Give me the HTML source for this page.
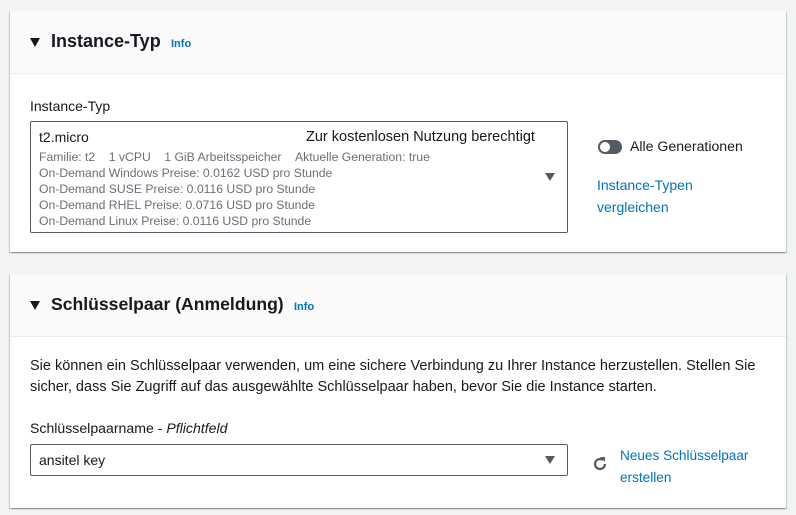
<!DOCTYPE html>
<html><head><meta charset="utf-8"><style>
*{box-sizing:border-box;margin:0;padding:0}
body{width:796px;height:515px;background:#f2f3f3;font-family:"Liberation Sans",sans-serif;color:#16191f;position:relative;overflow:hidden}
.panel{position:absolute;left:10px;width:776px;background:#fff;box-shadow:0 1px 1px rgba(0,28,36,.3),1px 1px 1px rgba(0,28,36,.15),-1px 1px 1px rgba(0,28,36,.15)}
.hdr{background:#fafafa;border-bottom:1px solid #eaeded;height:63px;position:relative}
.hdr .tri{position:absolute;left:20px;top:27px;width:0;height:0;border-left:5.5px solid transparent;border-right:5.5px solid transparent;border-top:9px solid #16191f}
.hdr h2{position:absolute;left:41px;font-size:18px;font-weight:bold;top:20px}
.info{color:#0073bb;font-size:11px;font-weight:bold;position:absolute}
.abs{position:absolute;white-space:nowrap}
.box{position:absolute;border:1px solid #545b64;border-radius:2px;background:#fff}
.g{color:#687078;font-size:12.2px}
.link{color:#0073bb;font-size:14px}
.dd{position:absolute;width:0;height:0;border-left:5px solid transparent;border-right:5px solid transparent;border-top:8px solid #545b64}
</style></head><body>
<div class="panel" style="top:11px;height:241px">
 <div class="hdr"><div class="tri"></div><h2>Instance-Typ</h2><span class="info" style="left:161px;top:27px">Info</span></div>
 <div class="abs" style="left:20px;top:87px;font-size:14px">Instance-Typ</div>
 <div class="box" style="left:20px;top:110px;width:538px;height:112px">
  <div class="abs" style="left:8px;top:7px;font-size:14px">t2.micro</div>
  <div class="abs" style="left:275px;top:7px;font-size:14.5px">Zur kostenlosen Nutzung berechtigt</div>
  <div class="abs g" style="left:8px;top:28px">Familie: t2 &nbsp;&nbsp;&nbsp;1 vCPU &nbsp;&nbsp;&nbsp;1 GiB Arbeitsspeicher &nbsp;&nbsp;&nbsp;Aktuelle Generation: true</div>
  <div class="abs g" style="left:8px;top:44px">On-Demand Windows Preise: 0.0162 USD pro Stunde</div>
  <div class="abs g" style="left:8px;top:60px">On-Demand SUSE Preise: 0.0116 USD pro Stunde</div>
  <div class="abs g" style="left:8px;top:76px">On-Demand RHEL Preise: 0.0716 USD pro Stunde</div>
  <div class="abs g" style="left:8px;top:92px">On-Demand Linux Preise: 0.0116 USD pro Stunde</div>
  <div class="dd" style="left:514px;top:51px"></div>
 </div>
 <div class="abs" style="left:588px;top:129px;width:24px;height:14px;border-radius:7px;background:#545b64"><div style="position:absolute;left:2px;top:2px;width:10px;height:10px;border-radius:5px;background:#fff"></div></div>
 <div class="abs" style="left:620px;top:127px;font-size:14.1px">Alle Generationen</div>
 <div class="abs link" style="left:587px;top:163px;line-height:22px">Instance-Typen<br>vergleichen</div>
</div>
<div class="panel" style="top:274px;height:234px">
 <div class="hdr"><div class="tri"></div><h2 style="font-size:17.6px">Schlüsselpaar (Anmeldung)</h2><span class="info" style="left:284px;top:27px">Info</span></div>
 <div class="abs" style="left:20px;top:82px;font-size:14.5px;line-height:21px;color:#16191f">Sie können ein Schlüsselpaar verwenden, um eine sichere Verbindung zu Ihrer Instance herzustellen. Stellen Sie<br>sicher, dass Sie Zugriff auf das ausgewählte Schlüsselpaar haben, bevor Sie die Instance starten.</div>
 <div class="abs" style="left:20px;top:146px;font-size:14.1px">Schlüsselpaarname - <i>Pflichtfeld</i></div>
 <div class="box" style="left:20px;top:170px;width:538px;height:32px">
  <div class="abs" style="left:8px;top:7px;font-size:14px">ansitel key</div>
  <div class="dd" style="left:514px;top:11px"></div>
 </div>
 <svg class="abs" style="left:582px;top:182px" width="16" height="16" viewBox="0 0 16 16"><path d="M13 8a5 5 0 1 1-2-4" fill="none" stroke="#545b64" stroke-width="2.2"/><path d="M8 1h5v5z" fill="#545b64"/></svg>
 <div class="abs link" style="left:610px;top:171px;line-height:22px;font-size:13.6px">Neues Schlüsselpaar<br>erstellen</div>
</div>
</body></html>
